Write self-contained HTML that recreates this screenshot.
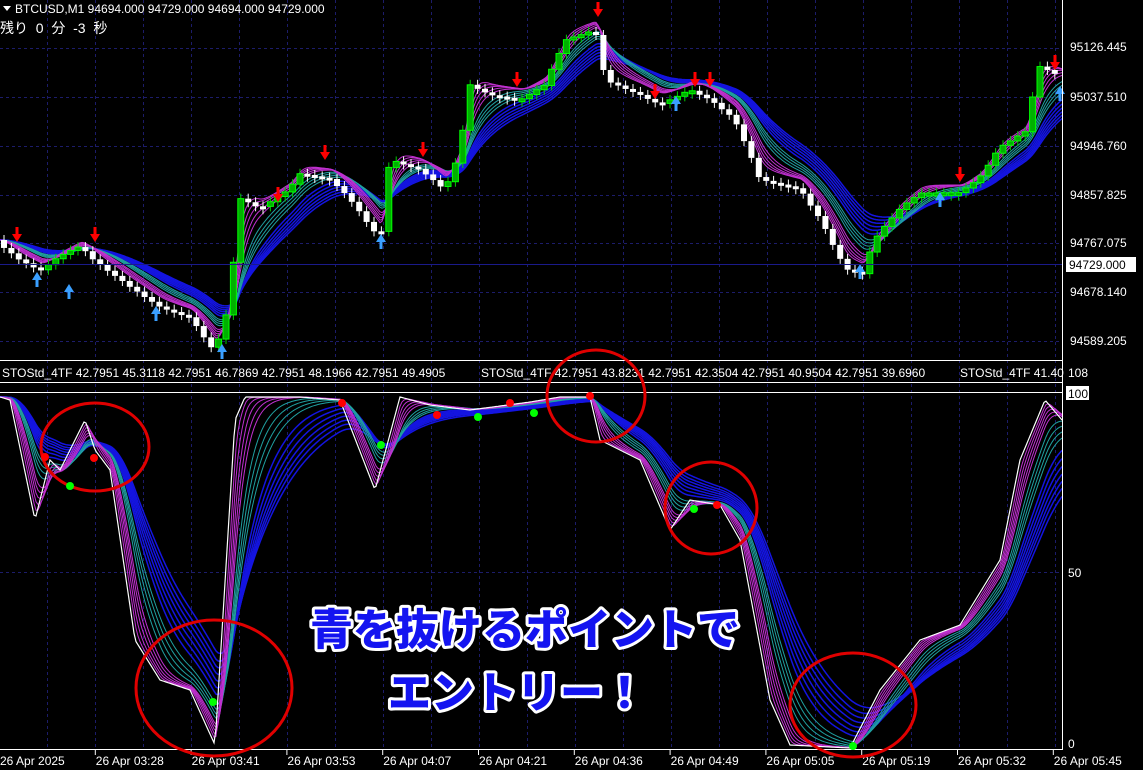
<!DOCTYPE html>
<html><head><meta charset="utf-8">
<style>
html,body{margin:0;padding:0;background:#000;width:1143px;height:770px;overflow:hidden}
svg{display:block}
text{font-family:"Liberation Sans","Noto Sans CJK JP",sans-serif}
</style></head><body>
<svg id="s" width="1143" height="770" xmlns="http://www.w3.org/2000/svg">
<rect width="1143" height="770" fill="#000"/>
<g id="grid"></g>
<g id="ind"></g>
<g id="price"></g>
<line x1="1062.5" y1="0" x2="1062.5" y2="750" stroke="#fff" stroke-width="1"/>
<line x1="0" y1="360.5" x2="1062" y2="360.5" stroke="#fff"/>
<line x1="0" y1="382.5" x2="1062" y2="382.5" stroke="#fff"/>
<line x1="0" y1="392.5" x2="1062" y2="392.5" stroke="#fff"/>
<line x1="0" y1="749.5" x2="1062" y2="749.5" stroke="#fff"/>
<line x1="0" y1="264.5" x2="1062" y2="264.5" stroke="#1a1a8a"/>
<path d="M3,6 L11,6 L7,11 Z" fill="#fff"/>
<text x="15" y="13" font-size="12" fill="#fff">BTCUSD,M1  94694.000 94729.000 94694.000 94729.000</text>
<text x="0" y="33" font-size="14" fill="#fff" font-family="'Noto Sans CJK JP',sans-serif" xml:space="preserve">残り  0  分  -3  秒</text>
<g font-size="12" fill="#fff">
<text x="1070" y="51">95126.445</text>
<text x="1070" y="101">95037.510</text>
<text x="1070" y="150">94946.760</text>
<text x="1070" y="199">94857.825</text>
<text x="1070" y="247">94767.075</text>
<text x="1070" y="296">94678.140</text>
<text x="1070" y="345">94589.205</text>
<rect x="1066" y="257" width="70" height="15" fill="#fff"/>
<text x="1069" y="269" fill="#000">94729.000</text>
<text x="1068" y="377">108</text>
<rect x="1066" y="386" width="23" height="14" fill="#fff"/>
<text x="1068" y="398" fill="#000">100</text>
<text x="1068" y="577">50</text>
<text x="1068" y="748">0</text>
</g>
<g font-size="12" fill="#fff">
<text x="2" y="377">STOStd_4TF 42.7951 45.3118 42.7951 46.7869 42.7951 48.1966 42.7951 49.4905</text>
<text x="481" y="377">STOStd_4TF 42.7951 43.8231 42.7951 42.3504 42.7951 40.9504 42.7951 39.6960</text>
<text x="960" y="377">STOStd_4TF 41.40</text>
</g>
<g id="time" font-size="12" fill="#fff"></g>
<g fill="none" stroke="#e00000" stroke-width="3">
<ellipse cx="95" cy="447" rx="54" ry="44"/>
<ellipse cx="214" cy="688" rx="78" ry="68"/>
<ellipse cx="596" cy="396" rx="49" ry="46"/>
<ellipse cx="711" cy="508" rx="46" ry="46"/>
<ellipse cx="853" cy="705" rx="63" ry="52"/>
</g>
<g id="dots"></g>
<g font-family="'Noto Sans CJK JP',sans-serif" font-weight="900" font-size="43" text-anchor="middle" fill="#1414f0" stroke="#fff" stroke-width="6" paint-order="stroke" stroke-linejoin="round">
<text x="525" y="645" font-family="'Noto Sans CJK JP',sans-serif">青を抜けるポイントで</text>
<text x="517" y="708" font-family="'Noto Sans CJK JP',sans-serif">エントリー！</text>
</g>
</svg>
<script>
(function(){
var NS="http://www.w3.org/2000/svg";
function el(p,t,a){var e=document.createElementNS(NS,t);for(var k in a)e.setAttribute(k,a[k]);p.appendChild(e);return e;}
var grid=document.getElementById('grid');
for(var x=47;x<1062;x+=48)el(grid,'line',{x1:x+.5,y1:0,x2:x+.5,y2:749,stroke:'#1c1c6a','stroke-dasharray':'3,3'});
[48,97,146,195,243,292,341,572].forEach(function(y){el(grid,'line',{x1:0,y1:y+.5,x2:1062,y2:y+.5,stroke:'#1c1c6a','stroke-dasharray':'3,3'});});
var tm=document.getElementById('time');
var labs=["26 Apr 2025","26 Apr 03:28","26 Apr 03:41","26 Apr 03:53","26 Apr 04:07","26 Apr 04:21","26 Apr 04:36","26 Apr 04:49","26 Apr 05:05","26 Apr 05:19","26 Apr 05:32","26 Apr 05:45"];
labs.forEach(function(l,i){var x=i==0?-2:i*95.8-2;el(tm,'line',{x1:x+1.5,y1:750,x2:x+1.5,y2:755,stroke:'#fff'});var t=el(tm,'text',{x:x+2,y:765});t.textContent=l;});
function interp(pts){var a=[];for(var x=0;x<=1062;x++){var i=0;while(i<pts.length-2&&pts[i+1][0]<x)i++;var p=pts[i],q=pts[i+1];var t=(x-p[0])/(q[0]-p[0]);t=Math.max(0,Math.min(1,t));a.push(p[1]+(q[1]-p[1])*t);}return a;}
function ema(a,n){var k=2/(n+1),o=[],v=a[0];for(var i=0;i<a.length;i++){v=v+(a[i]-v)*k;o.push(v);}return o;}
function pl(g,a,col,w){var d='';for(var i=0;i<a.length;i+=2)d+=(i?'L':'M')+i+','+a[i].toFixed(1);el(g,'path',{d:d,fill:'none',stroke:col,'stroke-width':w||1});}
var st=interp([[0,397],[10,400],[35,520],[50,460],[60,470],[85,420],[95,450],[110,470],[135,640],[160,680],[190,690],[215,745],[235,420],[245,397],[300,397],[340,400],[375,490],[400,397],[430,405],[470,410],[530,402],[560,397],[590,397],[600,440],[640,460],[670,530],[690,500],[720,505],[740,540],[770,700],[790,745],[850,748],[880,690],[920,640],[960,625],[1000,560],[1020,460],[1045,400],[1062,420]]);
var ind=document.getElementById('ind');
[60,68,76,84,92,100,110].forEach(function(n){pl(ind,ema(st,n),'#1414e0',1.5);});
[30,36,42,48].forEach(function(n){pl(ind,ema(st,n),'#20a0a0',1);});
[6,10,14,18,22].forEach(function(n){pl(ind,ema(st,n),'#c030d0',1);});
pl(ind,st,'#fff',1.2);
var dots=document.getElementById('dots');
[[45,457,'#f00'],[94,458,'#f00'],[70,486,'#0f0'],[213,702,'#0f0'],[342,403,'#f00'],[381,445,'#0f0'],[437,415,'#f00'],[478,417,'#0f0'],[510,403,'#f00'],[534,413,'#0f0'],[590,396,'#f00'],[694,509,'#0f0'],[717,505,'#f00'],[853,746,'#0f0']].forEach(function(d){el(dots,'circle',{cx:d[0],cy:d[1],r:4,fill:d[2]});});
var pr=interp([[0,240],[20,255],[40,265],[60,250],[80,240],[95,255],[130,280],[160,300],[190,310],[215,345],[228,300],[240,190],[260,200],[290,180],[300,165],[330,170],[350,190],[380,230],[390,150],[420,160],[445,180],[460,140],[470,75],[490,85],[520,90],[545,75],[565,30],[595,20],[605,70],[640,85],[660,95],[690,80],[710,90],[735,110],[760,170],[800,180],[820,210],[845,260],[862,265],[875,230],[900,200],[920,185],[960,185],[980,170],[1000,140],[1025,125],[1040,60],[1060,70]]);
var pg=document.getElementById('price');
[70,78,86,94,102,110].forEach(function(n){pl(pg,ema(pr,n),'#1414e0',1.5);});
[40,46,52,58].forEach(function(n){pl(pg,ema(pr,n),'#20a0a0',1);});
[12,16,20,25,30].forEach(function(n){pl(pg,ema(pr,n),'#c030d0',1);});
var prev=pr[0];
for(var x=4;x<1060;x+=7.4){var c=pr[Math.round(x)]+Math.sin(x*1.7)*10;var o=prev;prev=c;var tp=Math.min(o,c),h=Math.max(3,Math.abs(c-o));
 el(pg,'line',{x1:x,y1:tp-5,x2:x,y2:tp+h+5,stroke:c<o?'#0c0':'#fff'});
 if(c<o)el(pg,'rect',{x:x-3,y:tp,width:6,height:h,fill:'#00b000',stroke:'#0f0','stroke-width':1});
 else el(pg,'rect',{x:x-3,y:tp,width:6,height:h,fill:'#fff'});}
[[17,240],[95,240],[325,158],[423,155],[598,15],[517,85],[655,97],[695,85],[710,85],[960,180],[1055,68],[278,200]].forEach(function(a){el(pg,'path',{d:'M'+(a[0]-5)+','+(a[1]-6)+'L'+(a[0]+5)+','+(a[1]-6)+'L'+a[0]+','+(a[1]+2)+'Z',fill:'#f00'});el(pg,'line',{x1:a[0],y1:a[1]-13,x2:a[0],y2:a[1]-4,stroke:'#f00','stroke-width':3});});
[[37,278],[69,290],[156,312],[222,350],[381,240],[676,102],[860,270],[940,198],[1060,92]].forEach(function(a){el(pg,'path',{d:'M'+(a[0]-5)+','+(a[1]+2)+'L'+(a[0]+5)+','+(a[1]+2)+'L'+a[0]+','+(a[1]-6)+'Z',fill:'#3a9fff'});el(pg,'line',{x1:a[0],y1:a[1],x2:a[0],y2:a[1]+9,stroke:'#3a9fff','stroke-width':3});});
})();
</script>
</body></html>
